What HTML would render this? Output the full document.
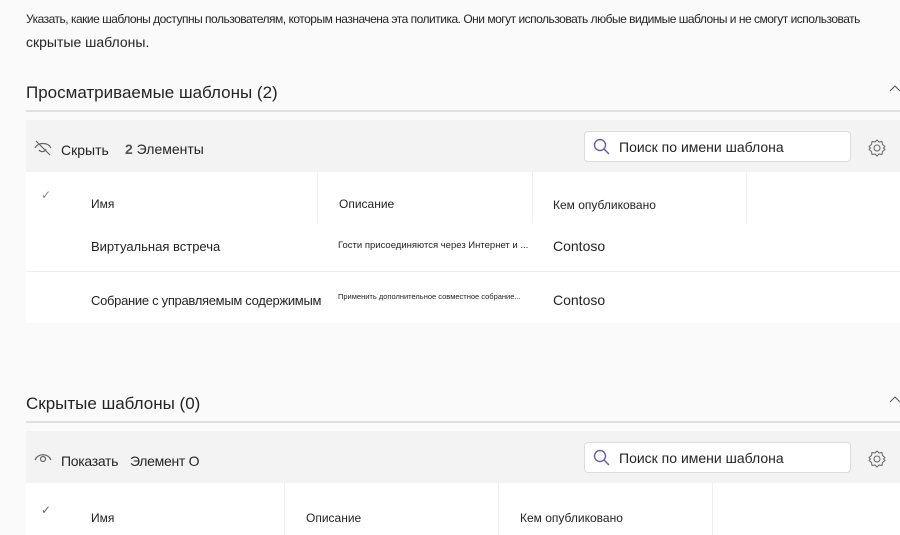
<!DOCTYPE html><html><head><meta charset="utf-8"><style>
*{margin:0;padding:0;box-sizing:border-box}
body{width:900px;height:535px;background:#fafafa;font-family:"Liberation Sans",sans-serif;color:#242424;position:relative;overflow:hidden}
.a{position:absolute;white-space:nowrap}
.line{position:absolute;left:26px;right:0;height:2px;background:#e0e0e0}
.band{position:absolute;left:26px;right:0;height:52px;background:#f3f3f3}
.tbl{position:absolute;left:26px;right:0;background:#fff}
.sep{position:absolute;width:1px;background:#f0f0f0}
.search{position:absolute;left:584px;width:267px;height:31px;background:#fff;border:1px solid #dcdcdc;border-radius:4px}
.search span{position:absolute;left:34px;top:7px;font-size:14px}
</style></head><body>
<div class="a" style="left:26px;top:12px;font-size:12px;letter-spacing:-0.5px">Указать, какие шаблоны доступны пользователям, которым назначена эта политика. Они могут использовать любые видимые шаблоны и не смогут использовать</div>
<div class="a" style="left:26px;top:34px;font-size:14px">скрытые шаблоны.</div>

<div class="a" style="left:26px;top:83px;font-size:17px">Просматриваемые шаблоны (2)</div>
<svg class="a" style="left:889px;top:84px" width="12" height="8"><path d="M1 7 L6 2 L11 7" stroke="#555" fill="none"/></svg>
<div class="line" style="top:110px"></div>
<div class="band" style="top:120px"></div>
<svg class="a" style="left:33px;top:139px" width="20" height="18" viewBox="0 0 20 18"><path d="M2 9 C5 3 15 3 18 9 M6 11 a4 4 0 0 0 7 -1" stroke="#666" fill="none" stroke-width="1.2"/><path d="M3 2 L17 16" stroke="#666" stroke-width="1.2"/></svg>
<div class="a" style="left:61px;top:142px;font-size:14px">Скрыть</div>
<div class="a" style="left:125px;top:141px;font-size:14px"><b style="color:#555">2</b> Элементы</div>
<div class="search" style="top:131px"><svg style="position:absolute;left:8px;top:6px" width="18" height="18"><circle cx="7" cy="7" r="5.5" stroke="#6264a7" stroke-width="1.4" fill="none"/><path d="M11 11 L16 16" stroke="#6264a7" stroke-width="1.5"/></svg><span>Поиск по имени шаблона</span></div>
<svg class="a" style="left:867px;top:138px" width="20" height="20" viewBox="0 0 20 20"><circle cx="10" cy="10" r="3" stroke="#666" fill="none"/><path d="M10 2 L12 4 L15 3.5 L15.5 6.5 L18 8.5 L16.5 10 L18 11.5 L15.5 13.5 L15 16.5 L12 16 L10 18 L8 16 L5 16.5 L4.5 13.5 L2 11.5 L3.5 10 L2 8.5 L4.5 6.5 L5 3.5 L8 4 Z" stroke="#666" fill="none" stroke-linejoin="round"/></svg>

<div class="tbl" style="top:172px;height:151px"></div>
<div class="sep" style="left:317px;top:172px;height:51px"></div>
<div class="sep" style="left:532px;top:172px;height:51px"></div>
<div class="sep" style="left:746px;top:172px;height:51px"></div>
<div class="a" style="left:41px;top:188px;font-size:12px;color:#888">✓</div>
<div class="a" style="left:91px;top:197px;font-size:12px">Имя</div>
<div class="a" style="left:339px;top:197px;font-size:12px">Описание</div>
<div class="a" style="left:553px;top:198px;font-size:12px">Кем опубликовано</div>
<div class="a" style="left:91px;top:239px;font-size:13px">Виртуальная встреча</div>
<div class="a" style="left:338px;top:240px;font-size:9.5px">Гости присоединяются через Интернет и ...</div>
<div class="a" style="left:553px;top:238px;font-size:14px">Contoso</div>
<div style="position:absolute;left:26px;right:0;top:271px;height:1px;background:#eee"></div>
<div class="a" style="left:91px;top:293px;font-size:13px;letter-spacing:-0.3px">Собрание с управляемым содержимым</div>
<div class="a" style="left:338px;top:292px;font-size:7.5px">Применить дополнительное совместное собрание...</div>
<div class="a" style="left:553px;top:292px;font-size:14px">Contoso</div>

<div class="a" style="left:26px;top:394px;font-size:17px">Скрытые шаблоны (0)</div>
<svg class="a" style="left:889px;top:395px" width="12" height="8"><path d="M1 7 L6 2 L11 7" stroke="#555" fill="none"/></svg>
<div class="line" style="top:421px"></div>
<div class="band" style="top:431px"></div>
<svg class="a" style="left:34px;top:452px" width="18" height="12" viewBox="0 0 18 12"><path d="M1 8 C4 1 14 1 17 8" stroke="#666" fill="none" stroke-width="1.3"/><circle cx="9" cy="7" r="2.5" stroke="#666" fill="none" stroke-width="1.2"/></svg>
<div class="a" style="left:61px;top:453px;font-size:14px;letter-spacing:-0.3px">Показать</div>
<div class="a" style="left:130px;top:453px;font-size:14px;letter-spacing:-0.3px">Элемент О</div>
<div class="search" style="top:442px"><svg style="position:absolute;left:8px;top:6px" width="18" height="18"><circle cx="7" cy="7" r="5.5" stroke="#6264a7" stroke-width="1.4" fill="none"/><path d="M11 11 L16 16" stroke="#6264a7" stroke-width="1.5"/></svg><span>Поиск по имени шаблона</span></div>
<svg class="a" style="left:867px;top:449px" width="20" height="20" viewBox="0 0 20 20"><circle cx="10" cy="10" r="3" stroke="#666" fill="none"/><path d="M10 2 L12 4 L15 3.5 L15.5 6.5 L18 8.5 L16.5 10 L18 11.5 L15.5 13.5 L15 16.5 L12 16 L10 18 L8 16 L5 16.5 L4.5 13.5 L2 11.5 L3.5 10 L2 8.5 L4.5 6.5 L5 3.5 L8 4 Z" stroke="#666" fill="none" stroke-linejoin="round"/></svg>
<div class="tbl" style="top:483px;height:52px"></div>
<div class="sep" style="left:284px;top:483px;height:52px"></div>
<div class="sep" style="left:498px;top:483px;height:52px"></div>
<div class="sep" style="left:712px;top:483px;height:52px"></div>
<div class="a" style="left:41px;top:503px;font-size:12px;color:#666">✓</div>
<div class="a" style="left:91px;top:511px;font-size:12px">Имя</div>
<div class="a" style="left:306px;top:511px;font-size:12px">Описание</div>
<div class="a" style="left:520px;top:511px;font-size:12px">Кем опубликовано</div>
</body></html>
